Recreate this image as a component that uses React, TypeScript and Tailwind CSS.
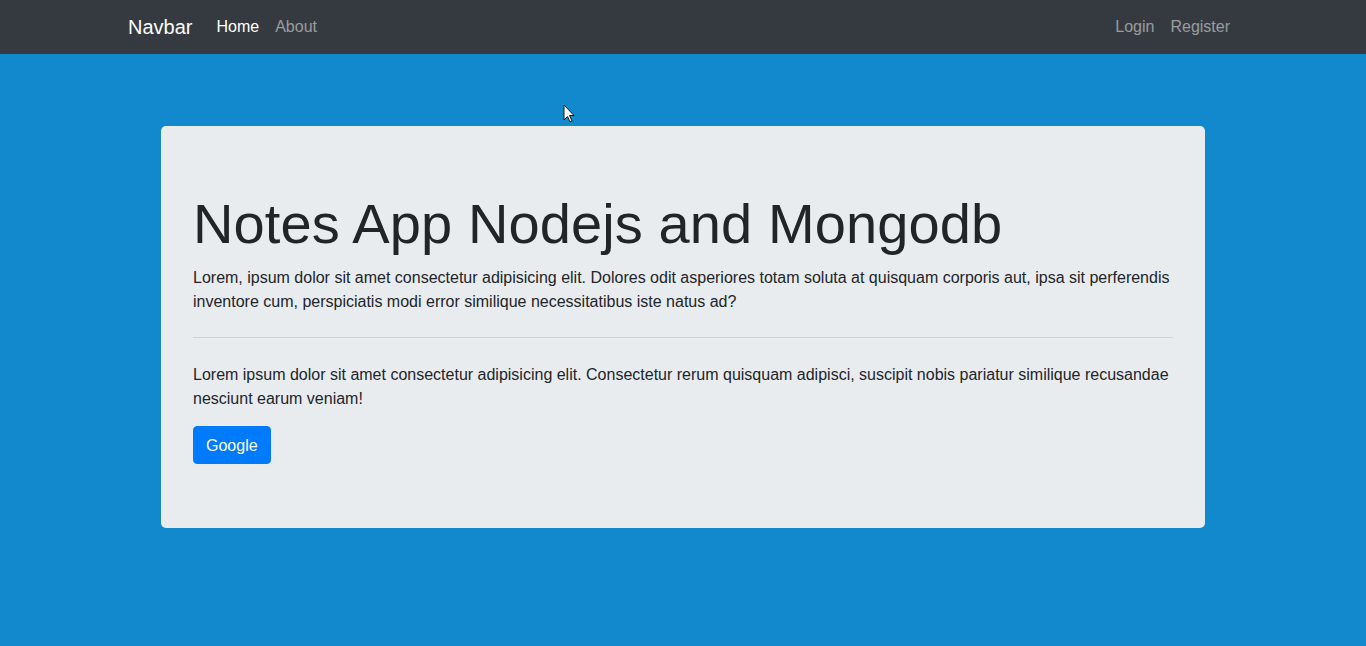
import React from "react"

const navLinks = [
  { label: "Home", active: true },
  { label: "About", active: false },
]

export default function App() {
  return (
    <div className="relative min-h-[646px] bg-[#1289cd] font-['Liberation_Sans',Arial,sans-serif] text-[#212529]">
      {/* Navbar */}
      <nav className="h-[54px] bg-[#343a40]">
        <div className="mx-auto flex h-full w-[1140px] items-center px-[15px]">
          <a className="mr-4 text-[20px] leading-[30px] text-white">Navbar</a>
          <ul className="flex">
            {navLinks.map((link) => (
              <li key={link.label}>
                <a className={`px-2 text-[16px] leading-6 ${link.active ? "text-white" : "text-white/50"}`}>
                  {link.label}
                </a>
              </li>
            ))}
          </ul>
          <ul className="ml-auto flex">
            <li>
              <a className="px-2 text-[16px] leading-6 text-white/50">Login</a>
            </li>
            <li>
              <a className="px-2 text-[16px] leading-6 text-white/50">Register</a>
            </li>
          </ul>
        </div>
      </nav>

      {/* Jumbotron */}
      <div className="px-[161px] pt-[72px]">
        <div className="rounded-[5px] bg-[#e9ecef] px-8 pt-16 pb-16">
          <h1 className="mb-2 text-[56px] font-light leading-[67.5px] tracking-[0.1px]">Notes App Nodejs and Mongodb</h1>
          <p className="text-[16px] leading-6">
            Lorem, ipsum dolor sit amet consectetur adipisicing elit. Dolores odit asperiores totam soluta at quisquam
            corporis aut, ipsa sit perferendis inventore cum, perspiciatis modi error similique necessitatibus iste
            natus ad?
          </p>
          <hr className="mt-[23px] mb-[25px] border-t border-black/10" />
          <p className="mb-[15px] text-[16px] leading-6">
            Lorem ipsum dolor sit amet consectetur adipisicing elit. Consectetur rerum quisquam adipisci, suscipit nobis
            pariatur similique recusandae nesciunt earum veniam!
          </p>
          <a className="inline-block rounded-[4px] border border-[#007bff] bg-[#007bff] px-3 pt-[7px] pb-[5px] text-[16px] leading-6 text-white">
            Google
          </a>
        </div>
      </div>

      {/* Mouse pointer */}
      <svg className="absolute left-[563px] top-[104px]" width="12" height="20" viewBox="0 0 12 20">
        <path d="M1 1 L1 16 L4.5 12.5 L7 18 L9 17 L6.5 11.5 L11 11.5 Z" fill="#fff" stroke="#1a1a1a" strokeWidth="1" />
      </svg>
    </div>
  )
}
